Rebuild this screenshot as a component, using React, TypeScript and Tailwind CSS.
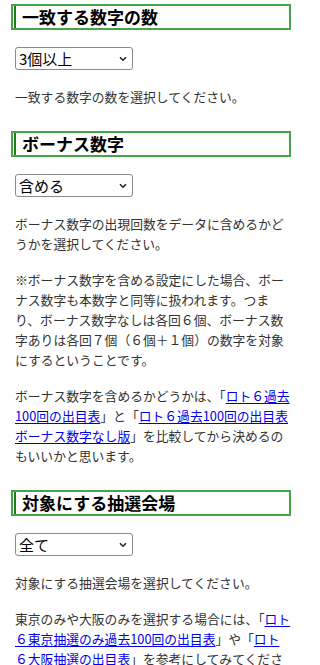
import { useState } from "react";

const font = { fontFamily: '"Noto Sans CJK JP", "Noto Sans", sans-serif' };

function Heading({ children, first }: { children: React.ReactNode; first?: boolean }) {
  return (
    <h2
      className={`${first ? "mt-[4px]" : "mt-[24px]"} flex border-2 border-l-0 border-[#46a546] text-[17px] leading-[22px] font-bold text-black`}
    >
      <span className="w-[2px] shrink-0 bg-[#46a546]" />
      <span className="w-[1px] shrink-0 bg-white" />
      <span className="w-[2px] shrink-0 bg-[#237a23]" />
      <span className="pl-[6px]">{children}</span>
    </h2>
  );
}

function Select({ options }: { options: string[] }) {
  const [value, setValue] = useState(options[0]);
  return (
    <div className="relative mt-[17px] ml-[4px] w-[118px]">
      <select
        value={value}
        onChange={(e) => setValue(e.target.value)}
        className="block h-[23px] w-full appearance-none rounded-[3px] border border-[#8a8a8a] bg-white pl-[3px] text-[15px] leading-[21px] text-black"
      >
        {options.map((o) => (
          <option key={o}>{o}</option>
        ))}
      </select>
      <svg
        className="pointer-events-none absolute right-[6px] top-[9px]"
        width="8"
        height="6"
        viewBox="0 0 8 6"
        fill="none"
        stroke="#222"
        strokeWidth="1.6"
      >
        <path d="M1 1.2l3 3 3-3" />
      </svg>
    </div>
  );
}

function A({ children }: { children: React.ReactNode }) {
  return (
    <a href="#" className="text-[#0000ee] underline underline-offset-2">
      {children}
    </a>
  );
}

const para = "pl-[4px] text-[12.8px] leading-[20px] break-all";

export default function App() {
  return (
    <div className="w-[300px] overflow-hidden bg-white pl-[11px] pr-[9px] pb-6 text-[#333]" style={font}>
      {/* 一致する数字の数 */}
      <Heading first>一致する数字の数</Heading>
      <Select options={["3個以上", "4個以上", "5個以上", "6個"]} />
      <p className={`mt-[17px] ${para}`}>一致する数字の数を選択してください。</p>

      {/* ボーナス数字 */}
      <Heading>ボーナス数字</Heading>
      <Select options={["含める", "含めない"]} />
      <p className={`mt-[17px] ${para}`}>
        ボーナス数字の出現回数をデータに含めるかどうかを選択してください。
      </p>
      <p className={`mt-[16px] ${para}`}>
        ※ボーナス数字を含める設定にした場合、ボーナス数字も本数字と同等に扱われます。つまり、ボーナス数字なしは各回６個、ボーナス数字ありは各回７個（６個＋１個）の数字を対象にするということです。
      </p>
      <p className={`mt-[16px] ${para}`}>
        ボーナス数字を含めるかどうかは、「<A>ロト６過去100回の出目表</A>」と「
        <A>ロト６過去100回の出目表ボーナス数字なし版</A>」を比較してから決めるのもいいかと思います。
      </p>

      {/* 対象にする抽選会場 */}
      <Heading>対象にする抽選会場</Heading>
      <Select options={["全て", "東京のみ", "大阪のみ"]} />
      <p className={`mt-[17px] ${para}`}>対象にする抽選会場を選択してください。</p>
      <p className={`mt-[16px] ${para}`}>
        東京のみや大阪のみを選択する場合には、「<A>ロト６東京抽選のみ過去100回の出目表</A>」や「
        <A>ロト６大阪抽選の出目表</A>」を参考にしてみてください。
      </p>
    </div>
  );
}
